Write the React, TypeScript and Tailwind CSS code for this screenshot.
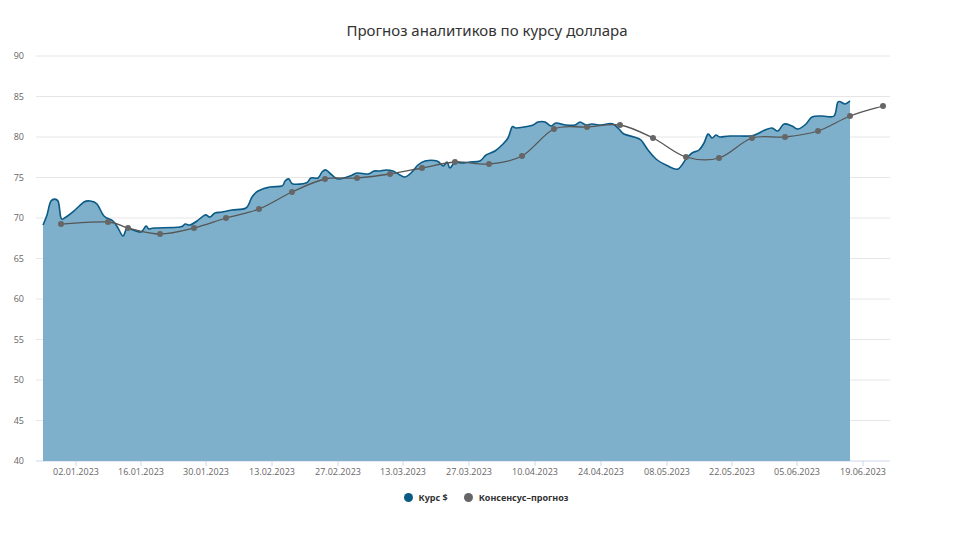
import React from 'react';

const toY = (v: number) => v;

const price: [number, number][] = [
  [43,225],[47,215],[51,201],[58,201],[61,218],[66,217],[75,210],[84,202],[90,201],[97,204],[104,216],[113,221],[118,228],[123,236],[127,228],[133,230],[141,232],[146,226],[149,229],[155,228],[180,227],[185,224],[190,225],[197,221],[205,215],[210,217],[215,213],[222,212],[232,210],[246,208],[252,197],[258,191],[270,187],[282,186],[285,181],[289,179],[293,184],[306,183],[311,178],[318,178],[322,172],[326,170],[332,175],[338,179],[350,176],[357,173],[368,174],[374,171],[380,171],[386,170],[393,171],[400,175],[405,177],[411,173],[418,165],[425,161],[437,161],[443,166],[447,162],[450,168],[455,162],[462,163],[470,162],[480,161],[486,155],[495,151],[502,145],[508,138],[512,127],[516,128],[524,127],[533,125],[538,122],[545,122],[551,126],[556,123],[566,125],[575,125],[580,122],[586,125],[592,124],[600,125],[607,124],[613,124],[619,129],[624,134],[634,137],[641,140],[648,150],[656,159],[668,166],[678,169],[686,159],[692,153],[699,150],[704,143],[708,134],[712,138],[716,135],[720,137],[730,136],[750,136],[757,134],[765,130],[772,128],[778,131],[784,124],[792,126],[798,129],[806,124],[812,117],[822,116],[834,116],[838,102],[845,104],[850,101],
];

const forecast: [number, number][] = [
  [61,224],[108,222],[128,228],[160,234],[194,228],[226,218],[259,209],[292,192],[325,179],[357,178],[390,174],[422,168],[455,162],[489,164],[522,156],[554,129],[587,127],[620,125],[653,138],[686,157],[719,158],[752,138],[785,137],[818,131],[850,116],[883,106],
];

function smooth(pts: [number, number][]) {
  let d = `M${pts[0][0]},${toY(pts[0][1])}`;
  for (let i = 0; i < pts.length - 1; i++) {
    const p0 = pts[i - 1] || pts[i];
    const p1 = pts[i];
    const p2 = pts[i + 1];
    const p3 = pts[i + 2] || p2;
    const c1x = p1[0] + (p2[0] - p0[0]) / 6;
    const c1y = p1[1] + (p2[1] - p0[1]) / 6;
    const c2x = p2[0] - (p3[0] - p1[0]) / 6;
    const c2y = p2[1] - (p3[1] - p1[1]) / 6;
    d += ` C${c1x.toFixed(1)},${c1y.toFixed(1)} ${c2x.toFixed(1)},${c2y.toFixed(1)} ${p2[0]},${p2[1]}`;
  }
  return d;
}

const yTicks = [90, 85, 80, 75, 70, 65, 60, 55, 50, 45, 40];
const dates: [number, string][] = [
  [76,'02.01.2023'],[141,'16.01.2023'],[206,'30.01.2023'],[272,'13.02.2023'],[338,'27.02.2023'],[403,'13.03.2023'],[469,'27.03.2023'],[535,'10.04.2023'],[601,'24.04.2023'],[667,'08.05.2023'],[732,'22.05.2023'],[797,'05.06.2023'],[863,'19.06.2023'],
];

export default function App() {
  const line = smooth(price);
  const area = `${line} L850,461 L43,461 Z`;
  return (
    <div className="w-[968px] h-[544px] bg-white font-['Open_Sans',sans-serif]">
      <h1 className="pt-[20px] text-center text-[15px] text-[#333] pl-[6px] leading-5">Прогноз аналитиков по курсу доллара</h1>
      <svg width="968" height="440" viewBox="0 40 968 440" className="block">
        {yTicks.map((v) => {
          const y = 461 - (v - 40) * 8.1;
          return (
            <g key={v}>
              <line x1="36" x2="890" y1={y} y2={y} stroke={v === 40 ? '#ccd6eb' : '#e6e6e6'} strokeWidth="1" />
              <text x="24" y={y + 3} fontSize="9" fill="#666" textAnchor="end" fontFamily="Open Sans, sans-serif">{v}</text>
            </g>
          );
        })}
        <path d={area} fill="#7fb0cb" />
        <path d={line} fill="none" stroke="#0a5a85" strokeWidth="1.6" />
        <path d={smooth(forecast)} fill="none" stroke="#555" strokeWidth="1.3" />
        {forecast.map(([x, y]) => (
          <circle key={x} cx={x} cy={y} r="3" fill="#666" />
        ))}
        {dates.map(([x, t]) => (
          <g key={t}>
            <line x1={x} x2={x} y1="461" y2="466" stroke="#ccd6eb" />
            <text x={x} y="475" fontSize="9" fill="#666" textAnchor="middle" fontFamily="Open Sans, sans-serif">{t}</text>
          </g>
        ))}
      </svg>
      <div className="flex justify-center items-center gap-4 mt-[11px] pl-[4px] text-[9px] font-bold text-[#333]">
        <div className="flex items-center gap-1.5">
          <span className="w-[9px] h-[9px] rounded-full bg-[#0a5a85]" />
          <span>Курс $</span>
        </div>
        <div className="flex items-center gap-1.5">
          <span className="w-[9px] h-[9px] rounded-full bg-[#666]" />
          <span>Консенсус–прогноз</span>
        </div>
      </div>
    </div>
  );
}
